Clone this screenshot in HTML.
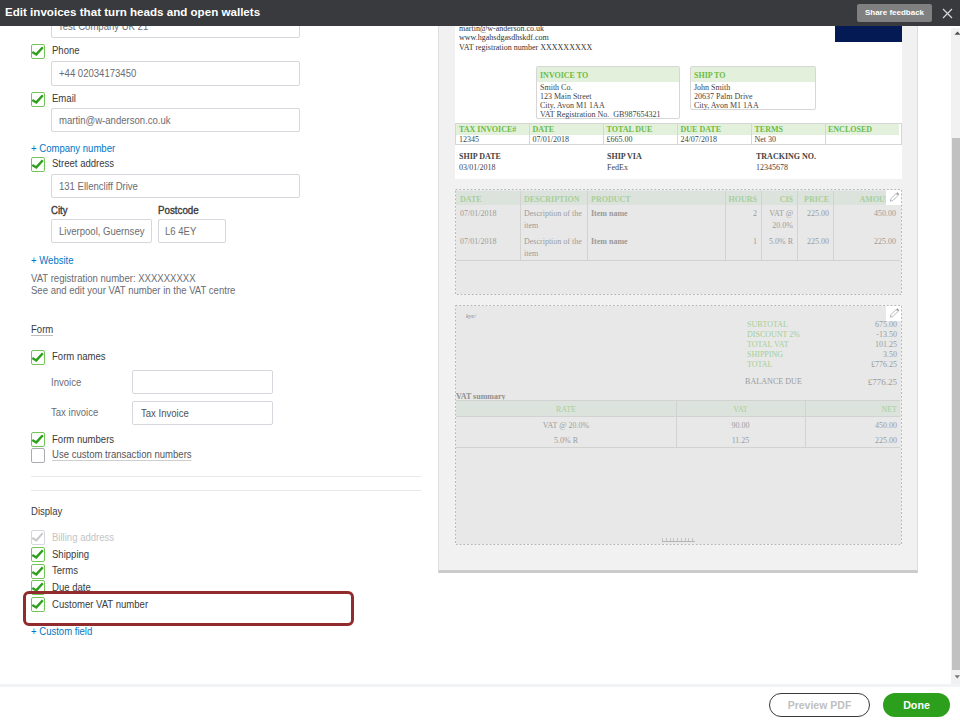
<!DOCTYPE html>
<html><head><meta charset="utf-8">
<style>
*{margin:0;padding:0;box-sizing:border-box}
html,body{width:960px;height:720px;overflow:hidden;background:#fff;font-family:"Liberation Sans",sans-serif;color:#393a3d}
.a{position:absolute}
#hdr{left:0;top:0;width:960px;height:26px;background:#393a3d}
#title{left:5px;top:5px;font-size:11.6px;font-weight:bold;color:#fff;white-space:nowrap;line-height:14px}
#share{left:857px;top:4px;width:75px;height:17.5px;background:#808080;border-radius:2px;color:#fff;font-weight:bold;font-size:8px;line-height:17.5px;text-align:center;white-space:nowrap}
.lbl{font-size:10px;white-space:nowrap;line-height:12px;color:#393a3d;transform:scaleX(0.955);transform-origin:0 0}
.inp{border:1.5px solid #d4d7dc;border-radius:2px;background:#fff}
.itx{font-size:10px;color:#393a3d;white-space:nowrap;line-height:12px;transform:scaleX(0.955);transform-origin:0 0}
.cb{width:14px;height:15px;border:1.5px solid #74c45a;border-radius:2px;background:#fff}
.cb svg{position:absolute;left:-1.5px;top:-1.5px}
.lnk{font-size:10px;color:#0077c5;white-space:nowrap;line-height:12px;transform:scaleX(0.955);transform-origin:0 0}
.hr{height:1px;background:#e9e9e9}
/* preview */
#panel{left:438px;top:26px;width:480px;height:547px;background:#f1f1f1;border-left:1.5px solid #dedede;border-right:1px solid #dcdcdc;border-bottom:3px solid #cbcbcb}
.ser{font-family:"Liberation Serif",serif;white-space:nowrap}
.g{color:#6bbd45}
.dash{border:1px dashed #c4c4c4;background:#e8e8e8}
</style></head><body>

<!-- left panel -->
<div class="a inp" style="left:51px;top:13px;width:249px;height:25px"></div>
<div class="a itx" style="left:58px;top:20.5px;color:#6b6c72">Test Company UK 21</div>

<div class="a cb" style="left:31px;top:44px"><svg width="14" height="15" viewBox="0 0 14 15"><path d="M1.3 7.9L5.3 10.4L11.8 3.2" stroke="#2ca01c" stroke-width="2.4" fill="none"/></svg></div>
<div class="a lbl" style="left:52px;top:45px">Phone</div>
<div class="a inp" style="left:51px;top:61px;width:249px;height:25px"></div>
<div class="a itx" style="left:59px;top:68px;color:#6b6c72">+44 02034173450</div>

<div class="a cb" style="left:31px;top:92px"><svg width="14" height="15" viewBox="0 0 14 15"><path d="M1.3 7.9L5.3 10.4L11.8 3.2" stroke="#2ca01c" stroke-width="2.4" fill="none"/></svg></div>
<div class="a lbl" style="left:52px;top:92.5px">Email</div>
<div class="a inp" style="left:51px;top:108px;width:249px;height:24px"></div>
<div class="a itx" style="left:59px;top:115px;color:#6b6c72">martin@w-anderson.co.uk</div>

<div class="a lnk" style="left:31px;top:143px">+ Company number</div>
<div class="a cb" style="left:31px;top:157px"><svg width="14" height="15" viewBox="0 0 14 15"><path d="M1.3 7.9L5.3 10.4L11.8 3.2" stroke="#2ca01c" stroke-width="2.4" fill="none"/></svg></div>
<div class="a lbl" style="left:52px;top:158px">Street address</div>
<div class="a inp" style="left:51px;top:174px;width:249px;height:24px"></div>
<div class="a itx" style="left:59px;top:180.5px;color:#6b6c72">131 Ellencliff Drive</div>

<div class="a lbl" style="left:51px;top:205px;-webkit-text-stroke:0.35px #393a3d;color:#393a3d">City</div>
<div class="a lbl" style="left:158px;top:205px;-webkit-text-stroke:0.35px #393a3d;color:#393a3d;transform:scaleX(0.975)">Postcode</div>
<div class="a inp" style="left:51px;top:219px;width:101px;height:24px"></div>
<div class="a itx" style="left:59px;top:226px;color:#6b6c72">Liverpool, Guernsey</div>
<div class="a inp" style="left:158px;top:219px;width:68px;height:24px"></div>
<div class="a itx" style="left:165px;top:226px;color:#6b6c72">L6 4EY</div>

<div class="a lnk" style="left:31px;top:255px">+ Website</div>
<div class="a lbl" style="left:31px;top:273px;color:#6b6c72">VAT registration number: XXXXXXXXX</div>
<div class="a lbl" style="left:31px;top:285px;color:#6b6c72">See and edit your VAT number in the VAT centre</div>

<div class="a lbl" style="left:31px;top:324px;border-bottom:1px solid #bdbdbd;line-height:11px">Form</div>
<div class="a cb" style="left:31px;top:350px"><svg width="14" height="15" viewBox="0 0 14 15"><path d="M1.3 7.9L5.3 10.4L11.8 3.2" stroke="#2ca01c" stroke-width="2.4" fill="none"/></svg></div>
<div class="a lbl" style="left:52px;top:350.5px">Form names</div>
<div class="a lbl" style="left:51px;top:376.5px;color:#6b6c72">Invoice</div>
<div class="a inp" style="left:132px;top:370px;width:141px;height:24px"></div>
<div class="a lbl" style="left:51px;top:406.5px;color:#6b6c72">Tax invoice</div>
<div class="a inp" style="left:132px;top:401px;width:141px;height:24px"></div>
<div class="a itx" style="left:141px;top:408px;color:#505155">Tax Invoice</div>
<div class="a cb" style="left:31px;top:432px"><svg width="14" height="15" viewBox="0 0 14 15"><path d="M1.3 7.9L5.3 10.4L11.8 3.2" stroke="#2ca01c" stroke-width="2.4" fill="none"/></svg></div>
<div class="a lbl" style="left:52px;top:434px">Form numbers</div>
<div class="a cb" style="left:31px;top:448px;border-color:#a9abb0"></div>
<div class="a lbl" style="left:52px;top:449px;border-bottom:1px solid #cfcfcf;line-height:11px;color:#55565a">Use custom transaction numbers</div>

<div class="a hr" style="left:31px;top:476px;width:390px"></div>
<div class="a hr" style="left:31px;top:490px;width:390px"></div>

<div class="a lbl" style="left:31px;top:505.5px">Display</div>
<div class="a cb" style="left:31px;top:530px;border-color:#d4d7dc"><svg width="14" height="15" viewBox="0 0 14 15"><path d="M1.3 7.9L5.3 10.4L11.8 3.2" stroke="#c8c8c8" stroke-width="2" fill="none"/></svg></div>
<div class="a lbl" style="left:52px;top:531.5px;color:#c4c4c4">Billing address</div>
<div class="a cb" style="left:31px;top:547px"><svg width="14" height="15" viewBox="0 0 14 15"><path d="M1.3 7.9L5.3 10.4L11.8 3.2" stroke="#2ca01c" stroke-width="2.4" fill="none"/></svg></div>
<div class="a lbl" style="left:52px;top:548.5px">Shipping</div>
<div class="a cb" style="left:31px;top:564px"><svg width="14" height="15" viewBox="0 0 14 15"><path d="M1.3 7.9L5.3 10.4L11.8 3.2" stroke="#2ca01c" stroke-width="2.4" fill="none"/></svg></div>
<div class="a lbl" style="left:52px;top:564.5px">Terms</div>
<div class="a cb" style="left:31px;top:580px"><svg width="14" height="15" viewBox="0 0 14 15"><path d="M1.3 7.9L5.3 10.4L11.8 3.2" stroke="#2ca01c" stroke-width="2.4" fill="none"/></svg></div>
<div class="a lbl" style="left:52px;top:581.5px">Due date</div>
<div class="a cb" style="left:31px;top:597px"><svg width="14" height="15" viewBox="0 0 14 15"><path d="M1.3 7.9L5.3 10.4L11.8 3.2" stroke="#2ca01c" stroke-width="2.4" fill="none"/></svg></div>
<div class="a lbl" style="left:52px;top:598.5px">Customer VAT number</div>
<div class="a" style="left:23px;top:591px;width:331px;height:35px;border:3px solid #922c2c;border-radius:6px"></div>
<div class="a lnk" style="left:31px;top:625.5px">+ Custom field</div>

<!-- preview -->
<div id="panel" class="a"></div>
<div class="a" style="left:455px;top:20px;width:447px;height:158.5px;background:#fff"></div>
<div class="a ser" style="left:459px;top:24px;font-size:8px;line-height:9.4px;color:#333">martin@w-anderson.co.uk<br>www.hgahsdgasdhskdf.com<br>VAT registration number XXXXXXXXX</div>
<div class="a" style="left:835px;top:20px;width:67px;height:22px;background:#031a55"></div>
<div class="a" style="left:536px;top:66px;width:144px;height:53px;border:1px solid #d6d6d6;border-radius:2px;background:#fff">
 <div class="a" style="left:0;top:0;width:142px;height:15px;background:#e3f0dc"></div>
</div>
<div class="a ser g" style="left:540px;top:70.5px;font-size:8px;font-weight:bold;line-height:10px">INVOICE TO</div>
<div class="a ser" style="left:540px;top:82.8px;font-size:8px;line-height:9.15px;color:#444">Smith Co.<br>123 Main Street<br>City, Avon M1 1AA<br>VAT Registration No.&nbsp; GB987654321</div>
<div class="a" style="left:690px;top:66px;width:126px;height:44px;border:1px solid #d6d6d6;border-radius:2px;background:#fff">
 <div class="a" style="left:0;top:0;width:124px;height:15px;background:#e3f0dc"></div>
</div>
<div class="a ser g" style="left:694px;top:70.5px;font-size:8px;font-weight:bold;line-height:10px">SHIP TO</div>
<div class="a ser" style="left:694px;top:82.8px;font-size:8px;line-height:9.15px;color:#444">John Smith<br>20637 Palm Drive<br>City, Avon M1 1AA</div>

<div class="a" style="left:455px;top:123px;width:447px;height:22px;border:1px solid #d6d6d6;background:#fff"></div>
<div class="a" style="left:456px;top:124px;width:443px;height:10.5px;background:#e3f0dc"></div>
<div class="a ser g" style="left:459px;top:125px;font-size:8px;font-weight:bold;line-height:10px">TAX INVOICE#</div>
<div class="a ser" style="left:459px;top:135px;font-size:8px;line-height:10px;color:#444">12345</div>
<div class="a" style="left:529px;top:124px;width:1px;height:20px;background:#d6d6d6"></div>
<div class="a ser g" style="left:532.5px;top:125px;font-size:8px;font-weight:bold;line-height:10px">DATE</div>
<div class="a ser" style="left:532.5px;top:135px;font-size:8px;line-height:10px;color:#444">07/01/2018</div>
<div class="a" style="left:603px;top:124px;width:1px;height:20px;background:#d6d6d6"></div>
<div class="a ser g" style="left:606.5px;top:125px;font-size:8px;font-weight:bold;line-height:10px">TOTAL DUE</div>
<div class="a ser" style="left:606.5px;top:135px;font-size:8px;line-height:10px;color:#444">&pound;665.00</div>
<div class="a" style="left:677px;top:124px;width:1px;height:20px;background:#d6d6d6"></div>
<div class="a ser g" style="left:680.5px;top:125px;font-size:8px;font-weight:bold;line-height:10px">DUE DATE</div>
<div class="a ser" style="left:680.5px;top:135px;font-size:8px;line-height:10px;color:#444">24/07/2018</div>
<div class="a" style="left:751px;top:124px;width:1px;height:20px;background:#d6d6d6"></div>
<div class="a ser g" style="left:754.5px;top:125px;font-size:8px;font-weight:bold;line-height:10px">TERMS</div>
<div class="a ser" style="left:754.5px;top:135px;font-size:8px;line-height:10px;color:#444">Net 30</div>
<div class="a" style="left:825px;top:124px;width:1px;height:20px;background:#d6d6d6"></div>
<div class="a ser g" style="left:828px;top:125px;font-size:8px;font-weight:bold;line-height:10px">ENCLOSED</div>
<div class="a ser" style="left:828px;top:135px;font-size:8px;line-height:10px;color:#444"></div>

<div class="a ser" style="left:459px;top:152px;font-size:8px;font-weight:bold;line-height:10px;color:#444">SHIP DATE</div>
<div class="a ser" style="left:459px;top:163px;font-size:8px;line-height:10px;color:#444">03/01/2018</div>
<div class="a ser" style="left:607px;top:152px;font-size:8px;font-weight:bold;line-height:10px;color:#444">SHIP VIA</div>
<div class="a ser" style="left:607px;top:163px;font-size:8px;line-height:10px;color:#444">FedEx</div>
<div class="a ser" style="left:756px;top:152px;font-size:8px;font-weight:bold;line-height:10px;color:#444">TRACKING NO.</div>
<div class="a ser" style="left:756px;top:163px;font-size:8px;line-height:10px;color:#444">12345678</div>

<!-- items box -->
<div class="a" style="left:455px;top:189px;width:447px;height:106px;background:#e8e8e8"></div>
<div class="a" style="left:456px;top:191px;width:444px;height:13.5px;background:#dce3dc"></div>
<div class="a" style="left:456px;top:259.5px;width:444px;height:1px;background:#d2d2d2"></div>
<div class="a ser" style="left:456px;top:195px;width:64px;padding-left:4px;text-align:left;font-size:8px;line-height:10px;color:#a8cf9a;font-weight:bold;overflow:hidden">DATE</div>
<div class="a ser" style="left:456px;top:208px;width:64px;padding-left:4px;text-align:left;font-size:8px;line-height:12px;color:#9c9c9c">07/01/2018</div>
<div class="a ser" style="left:456px;top:235.5px;width:64px;padding-left:4px;text-align:left;font-size:8px;line-height:12px;color:#9c9c9c">07/01/2018</div>
<div class="a" style="left:520px;top:191px;width:1px;height:69px;background:#d2d2d2"></div>
<div class="a ser" style="left:520px;top:195px;width:67px;padding-left:4px;text-align:left;font-size:8px;line-height:10px;color:#a8cf9a;font-weight:bold;overflow:hidden">DESCRIPTION</div>
<div class="a ser" style="left:520px;top:208px;width:67px;padding-left:4px;text-align:left;font-size:8px;line-height:12px;color:#9c9c9c">Description of the<br>item</div>
<div class="a ser" style="left:520px;top:235.5px;width:67px;padding-left:4px;text-align:left;font-size:8px;line-height:12px;color:#9c9c9c">Description of the<br>item</div>
<div class="a" style="left:587px;top:191px;width:1px;height:69px;background:#d2d2d2"></div>
<div class="a ser" style="left:587px;top:195px;width:138px;padding-left:4px;text-align:left;font-size:8px;line-height:10px;color:#a8cf9a;font-weight:bold;overflow:hidden">PRODUCT</div>
<div class="a ser" style="left:587px;top:208px;width:138px;padding-left:4px;text-align:left;font-size:8px;line-height:12px;color:#9c9c9c"><b style="color:#999">Item name</b></div>
<div class="a ser" style="left:587px;top:235.5px;width:138px;padding-left:4px;text-align:left;font-size:8px;line-height:12px;color:#9c9c9c"><b style="color:#999">Item name</b></div>
<div class="a" style="left:725px;top:191px;width:1px;height:69px;background:#d2d2d2"></div>
<div class="a ser" style="left:725px;top:195px;width:36.0px;padding-right:4px;text-align:right;font-size:8px;line-height:10px;color:#a8cf9a;font-weight:bold;overflow:hidden">HOURS</div>
<div class="a ser" style="left:725px;top:208px;width:36.0px;padding-right:4px;text-align:right;font-size:8px;line-height:12px;color:#9c9c9c">2</div>
<div class="a ser" style="left:725px;top:235.5px;width:36.0px;padding-right:4px;text-align:right;font-size:8px;line-height:12px;color:#9c9c9c">1</div>
<div class="a" style="left:761px;top:191px;width:1px;height:69px;background:#d2d2d2"></div>
<div class="a ser" style="left:761px;top:195px;width:36.0px;padding-right:4px;text-align:right;font-size:8px;line-height:10px;color:#a8cf9a;font-weight:bold;overflow:hidden">CIS</div>
<div class="a ser" style="left:761px;top:208px;width:36.0px;padding-right:4px;text-align:right;font-size:8px;line-height:12px;color:#9c9c9c">VAT @<br>20.0%</div>
<div class="a ser" style="left:761px;top:235.5px;width:36.0px;padding-right:4px;text-align:right;font-size:8px;line-height:12px;color:#9c9c9c">5.0% R</div>
<div class="a" style="left:797px;top:191px;width:1px;height:69px;background:#d2d2d2"></div>
<div class="a ser" style="left:797px;top:195px;width:36px;padding-right:4px;text-align:right;font-size:8px;line-height:10px;color:#a8cf9a;font-weight:bold;overflow:hidden">PRICE</div>
<div class="a ser" style="left:797px;top:208px;width:36px;padding-right:4px;text-align:right;font-size:8px;line-height:12px;color:#9c9c9c">225.00</div>
<div class="a ser" style="left:797px;top:235.5px;width:36px;padding-right:4px;text-align:right;font-size:8px;line-height:12px;color:#9c9c9c">225.00</div>
<div class="a" style="left:833px;top:191px;width:1px;height:69px;background:#d2d2d2"></div>
<div class="a ser" style="left:833px;top:195px;width:67px;padding-right:4px;text-align:right;font-size:8px;line-height:10px;color:#a8cf9a;font-weight:bold;overflow:hidden">AMOUNT</div>
<div class="a ser" style="left:833px;top:208px;width:67px;padding-right:4px;text-align:right;font-size:8px;line-height:12px;color:#9c9c9c">450.00</div>
<div class="a ser" style="left:833px;top:235.5px;width:67px;padding-right:4px;text-align:right;font-size:8px;line-height:12px;color:#9c9c9c">225.00</div>

<div class="a" style="left:886px;top:189px;width:15px;height:16px;background:#fff"></div>
<svg class="a" style="left:455px;top:189px" width="447" height="106"><rect x="0.5" y="0.5" width="446" height="105" fill="none" stroke="#f8f8f8"/><rect x="0.5" y="0.5" width="446" height="105" fill="none" stroke="#b9b9b9" stroke-dasharray="2 1.75"/></svg>
<svg class="a" style="left:886px;top:189px" width="16" height="16" viewBox="0 0 16 16"><path d="M4.3 12.2L5 9.6L10 4.6L11.9 6.5L6.9 11.5Z" fill="none" stroke="#a3a8b0" stroke-width="0.8"/><path d="M10.3 4.3L11.3 3.3L13.2 5.2L12.2 6.2Z" fill="#8f949c"/></svg>

<!-- totals box -->
<div class="a" style="left:455px;top:305px;width:447px;height:240px;background:#e8e8e8"></div>
<div class="a" style="left:886px;top:305px;width:15px;height:16px;background:#fff"></div>
<svg class="a" style="left:455px;top:305px" width="447" height="240"><rect x="0.5" y="0.5" width="446" height="239" fill="none" stroke="#f8f8f8"/><rect x="0.5" y="0.5" width="446" height="239" fill="none" stroke="#b9b9b9" stroke-dasharray="2 1.75"/></svg>
<svg class="a" style="left:886px;top:305px" width="16" height="16" viewBox="0 0 16 16"><path d="M4.3 12.2L5 9.6L10 4.6L11.9 6.5L6.9 11.5Z" fill="none" stroke="#a3a8b0" stroke-width="0.8"/><path d="M10.3 4.3L11.3 3.3L13.2 5.2L12.2 6.2Z" fill="#8f949c"/></svg>
<div class="a ser" style="left:466px;top:311px;font-size:6.2px;line-height:9px;font-style:italic;color:#8a8a8a">kye/</div>
<div class="a ser" style="left:747px;top:320px;font-size:8px;line-height:9.95px;color:#a5cf95">SUBTOTAL<br>DISCOUNT 2%<br>TOTAL VAT<br>SHIPPING<br>TOTAL</div>
<div class="a ser" style="left:797px;top:320px;width:100px;text-align:right;font-size:8px;line-height:9.95px;color:#9c9c9c">675.00<br>-13.50<br>101.25<br>3.50<br>&pound;776.25</div>
<div class="a ser" style="left:745px;top:377px;font-size:8.1px;line-height:10px;color:#9c9c9c">BALANCE DUE</div>
<div class="a ser" style="left:797px;top:376.5px;width:100px;text-align:right;font-size:9px;line-height:10px;color:#9c9c9c">&pound;776.25</div>
<div class="a ser" style="left:456px;top:391.5px;font-size:8px;line-height:10px;color:#8f8f8f;font-weight:bold">VAT summary</div>
<div class="a" style="left:456px;top:400px;width:444px;height:17px;background:#dce3dc"></div>
<div class="a" style="left:456px;top:400px;width:444px;height:1px;background:#d2d2d2"></div>
<div class="a" style="left:456px;top:416px;width:444px;height:1px;background:#d2d2d2"></div>
<div class="a" style="left:456px;top:447px;width:444px;height:1px;background:#d2d2d2"></div>
<div class="a" style="left:676px;top:400px;width:1px;height:47px;background:#d2d2d2"></div>
<div class="a" style="left:805px;top:400px;width:1px;height:47px;background:#d2d2d2"></div>
<div class="a ser" style="left:456px;top:405px;width:220px;text-align:center;font-size:8px;line-height:10px;color:#a8cf9a">RATE</div>
<div class="a ser" style="left:676px;top:405px;width:129px;text-align:center;font-size:8px;line-height:10px;color:#a8cf9a">VAT</div>
<div class="a ser" style="left:805px;top:405px;width:92px;text-align:right;font-size:8px;line-height:10px;color:#a8cf9a">NET</div>
<div class="a ser" style="left:456px;top:418px;width:220px;text-align:center;font-size:8px;line-height:15px;color:#9c9c9c">VAT @ 20.0%<br>5.0% R</div>
<div class="a ser" style="left:676px;top:418px;width:129px;text-align:center;font-size:8px;line-height:15px;color:#9c9c9c">90.00<br>11.25</div>
<div class="a ser" style="left:805px;top:418px;width:92px;text-align:right;font-size:8px;line-height:15px;color:#9c9c9c">450.00<br>225.00</div>
<div class="a" style="left:662px;top:538px;width:33px;height:3px;background:repeating-linear-gradient(90deg,#c4c4c4 0 1.2px,transparent 1.2px 3.75px)"></div>
<div class="a" style="left:662px;top:540.5px;width:33px;height:1.5px;background:#b4b4b4"></div>

<!-- footer -->
<div class="a" style="left:0;top:684px;width:960px;height:3px;background:#f1f3f5"></div>
<div class="a" style="left:769px;top:693px;width:101px;height:24px;border:1.5px solid #393a3d;border-radius:12px;color:#c0c0c0;font-weight:bold;font-size:10.5px;line-height:22px;text-align:center">Preview PDF</div>
<div class="a" style="left:883px;top:693px;width:67px;height:24px;background:#2ca01c;border-radius:12px;color:#fff;font-weight:bold;font-size:10.7px;line-height:25px;text-align:center">Done</div>

<!-- scrollbar -->
<div class="a" style="left:951px;top:28px;width:9px;height:656px;background:#f1f1f1"></div>
<div class="a" style="left:952px;top:138px;width:8px;height:532px;background:#c1c1c1"></div>
<svg class="a" style="left:950px;top:28px" width="10" height="660"><path d="M4.5 6.8L7.5 3.6L10.5 6.8Z" fill="#505050"/><path d="M4.6 647.2L7.3 650.4L10 647.2Z" fill="#777"/></svg>
<div id="hdr" class="a"></div>
<div id="title" class="a">Edit invoices that turn heads and open wallets</div>
<div id="share" class="a">Share feedback</div>
<svg class="a" style="left:942px;top:8px" width="11" height="11" viewBox="0 0 11 11"><path d="M1 1L10 10M10 1L1 10" stroke="#d8d8d8" stroke-width="1.2"/></svg>
</body></html>
